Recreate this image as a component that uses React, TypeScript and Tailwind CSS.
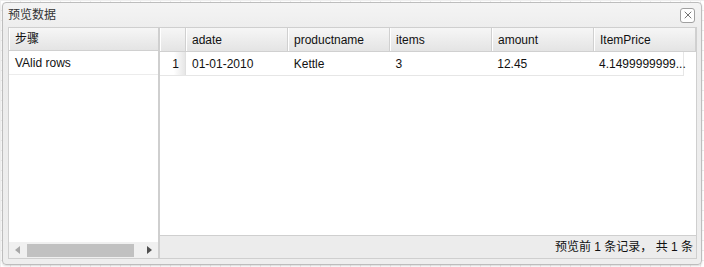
import { X } from "lucide-react";

const columns = [
  { name: "adate", width: "w-[102px]", value: "01-01-2010" },
  { name: "productname", width: "w-[102px]", value: "Kettle" },
  { name: "items", width: "w-[102px]", value: "3" },
  { name: "amount", width: "w-[102px]", value: "12.45" },
  { name: "ItemPrice", width: "w-[102px]", value: "4.1499999999..." },
];

const headerCell =
  "h-[23px] flex items-center px-[6px] border-r border-r-[#d0d0d0] shadow-[inset_1px_0_0_#ffffff] bg-[linear-gradient(#f6f6f6,#e4e4e4)]";

function StepsPanel() {
  return (
    <div className="w-[151px] flex flex-col border border-[#cfcfcf] bg-white">
      <div className={`${headerCell} border-b border-b-[#d0d0d0] border-r-0`}>步骤</div>
      <div className="h-[24px] flex items-center px-[6px] border-b border-[#ececec]">VAlid rows</div>
      <div className="flex-1" />
      <div className="h-[16px] flex items-center bg-[#f0f0f0] px-[6px] gap-[7px]">
        <span className="w-0 h-0 border-y-[4px] border-y-transparent border-r-[5px] border-r-[#a8a8a8]" />
        <div className="w-[112px] h-[13px] bg-[#c1c1c1]" />
        <span className="ml-[6px] w-0 h-0 border-y-[4px] border-y-transparent border-l-[5px] border-l-[#505050]" />
      </div>
    </div>
  );
}

function DataGrid() {
  return (
    <div className="flex-1 flex flex-col border border-[#cfcfcf] bg-white">
      <div className="flex border-b border-[#d0d0d0]">
        <div className={`${headerCell} w-[26px]`} />
        {columns.map((c) => (
          <div key={c.name} className={`${headerCell} ${c.width}`}>
            {c.name}
          </div>
        ))}
      </div>
      <div className="flex w-[524px] h-[24px] border-b border-r border-[#e6e6e6]">
        <div className="w-[26px] flex items-center justify-end pr-[6px] bg-[linear-gradient(90deg,#ffffff_55%,#e6e6e6)] border-r border-[#e0e0e0]">
          1
        </div>
        {columns.map((c, i) => (
          <div
            key={c.name}
            className={`flex items-center px-[6px] whitespace-nowrap ${i === columns.length - 1 ? "w-[90px] pr-0" : c.width}`}
          >
            {c.value}
          </div>
        ))}
      </div>
      <div className="flex-1" />
      <div className="h-[23px] flex items-center justify-end pr-[3px] bg-[#ececec] border-t border-[#cfcfcf]">
        预览前 1 条记录， 共 1 条
      </div>
    </div>
  );
}

export default function App() {
  return (
    <div className="w-[704px] h-[267px] overflow-hidden bg-white bg-[linear-gradient(90deg,#eeeeee_1px,transparent_1px),linear-gradient(#eeeeee_1px,transparent_1px)] bg-[size:10px_10px] pt-[2px] pl-[2px] font-['Liberation_Sans','Noto_Sans_CJK_SC',sans-serif] text-[12px] text-[#111]">
      <div className="w-[700px] h-[263px] flex flex-col rounded-[4px] border border-[#bdbdbd] bg-[linear-gradient(#f4f4f4,#ececec_30px,#eeeeee)] shadow-[0_1px_2px_rgba(0,0,0,0.15)]">
        <div className="h-[24px] flex items-center justify-between pl-[5px] pr-[6px] text-[#333]">
          <span>预览数据</span>
          <button className="w-[15px] h-[15px] flex items-center justify-center rounded-[3px] border border-[#a0a0a0] bg-white text-[#444]">
            <X size={12} strokeWidth={1.5} />
          </button>
        </div>
        <div className="flex-1 flex pl-[5px] pr-[5px] pb-[5px]">
          <StepsPanel />
          <DataGrid />
        </div>
      </div>
    </div>
  );
}
